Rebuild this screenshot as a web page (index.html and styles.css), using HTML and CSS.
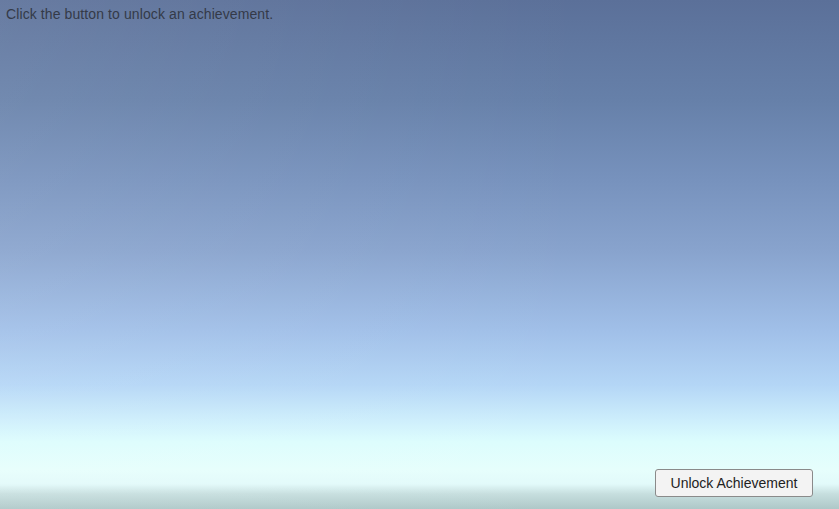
FILE: index.html
```html
<!DOCTYPE html>
<html>
<head>
<meta charset="utf-8">
<link rel="stylesheet" href="styles.css">
</head>
<body>
<div class="scene">
  <div class="label">Click the button to unlock an achievement.</div>
  <div class="spacer"></div>
  <div class="footer">
    <button class="btn">Unlock Achievement</button>
  </div>
</div>
</body>
</html>
```
FILE: styles.css
```css
html, body {
  margin: 0;
  padding: 0;
  width: 839px;
  height: 509px;
  overflow: hidden;
}
.scene {
  width: 839px;
  height: 509px;
  display: flex;
  flex-direction: column;
  font-family: "Liberation Sans", Arial, sans-serif;
  background:
    linear-gradient(to right, rgba(255,255,255,0.08), rgba(255,255,255,0) 70%),
    linear-gradient(to bottom,
      #5b7099 0px,
      #6680a9 100px,
      #7792bd 180px,
      #88a3cd 250px,
      #a0bfe8 330px,
      #b4d6f6 385px,
      #cdeefc 420px,
      #dcfdfd 442px,
      #e6fefc 470px,
      #e2fafa 484px,
      #c6dede 494px,
      #aec8c8 509px);
}
.label {
  padding: 6px 0 0 6px;
  font-size: 14px;
  line-height: 16px;
  letter-spacing: 0.1px;
  color: #343a48;
}
.spacer {
  flex: 1;
}
.footer {
  display: flex;
  justify-content: flex-end;
  padding: 0 26px 12px 0;
}
.btn {
  width: 158px;
  height: 28px;
  padding: 0;
  background: #f3f3f3;
  border: 1px solid #8a8a8a;
  border-radius: 3px;
  font-family: "Liberation Sans", Arial, sans-serif;
  font-size: 14px;
  color: #222;
}
```
